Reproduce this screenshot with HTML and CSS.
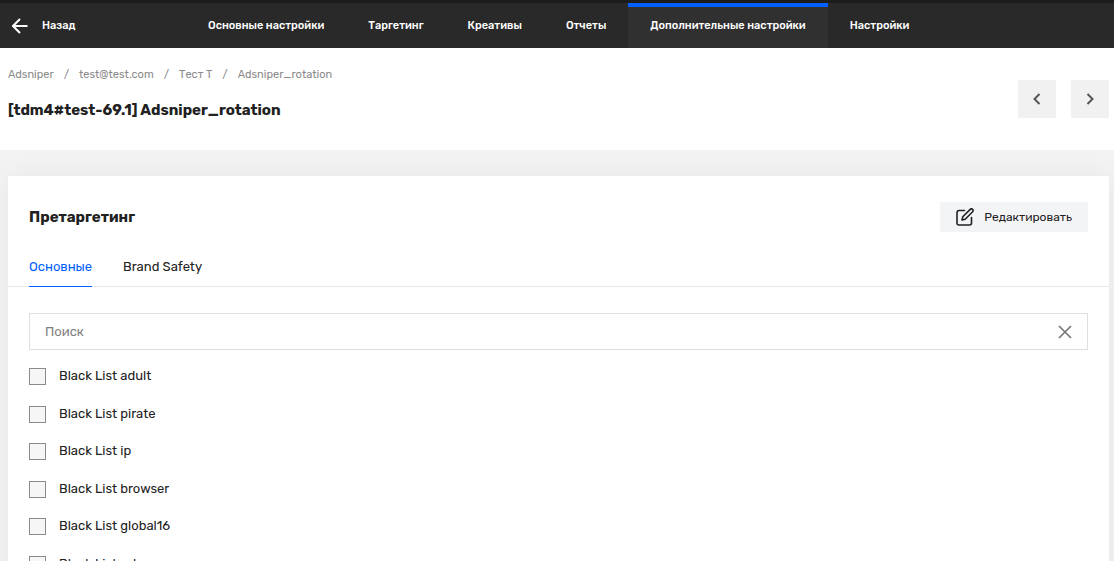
FILE: index.html
```html
<!DOCTYPE html>
<html lang="ru">
<head>
<meta charset="utf-8">
<meta name="viewport" content="width=device-width, initial-scale=1">
<title>Adsniper_rotation</title>
<link rel="stylesheet" href="styles.css">
</head>
<body>
<div class="app">
  <header class="topbar">
    <a class="back" href="#">
      <svg class="back-icon" viewBox="0 0 16 16" width="16" height="16" aria-hidden="true"><path d="M15.5 8H1M8 1 1 8l7 7"/></svg>
      <span>Назад</span>
    </a>
    <nav class="menu">
      <a class="menu-item" href="#">Основные настройки</a>
      <a class="menu-item" href="#">Таргетинг</a>
      <a class="menu-item" href="#">Креативы</a>
      <a class="menu-item" href="#">Отчеты</a>
      <a class="menu-item menu-item-active" href="#">Дополнительные настройки</a>
      <a class="menu-item" href="#">Настройки</a>
    </nav>
  </header>

  <section class="heading">
    <div class="heading-text">
      <nav class="crumbs">
        <a href="#">Adsniper</a><span>/</span><a href="#">test@test.com</a><span>/</span><a href="#">Тест Т</a><span>/</span><a href="#">Adsniper_rotation</a>
      </nav>
      <h1 class="title">[tdm4#test-69.1] Adsniper_rotation</h1>
    </div>
    <div class="pager">
      <button class="pager-button" type="button" aria-label="Назад"><svg viewBox="0 0 8 12" width="8" height="12"><path d="M6.500 1 1.500 6l5 5"/></svg></button>
      <button class="pager-button" type="button" aria-label="Вперед"><svg viewBox="0 0 8 12" width="8" height="12"><path d="m1.500 1 5 5-5 5"/></svg></button>
    </div>
  </section>

  <main class="content">
    <section class="card">
      <div class="card-head">
        <h2 class="card-title">Претаргетинг</h2>
        <button class="edit" type="button">
          <svg class="edit-icon" viewBox="0 0 18 18" width="18" height="18" aria-hidden="true"><path d="M8.500 2.500H3a2 2 0 0 0-2 2V15a2 2 0 0 0 2 2h10.500a2 2 0 0 0 2-2V9.500"/><path d="M6 12 6.800 8.800 14.200 1.400a1.600 1.600 0 0 1 2.400 2.400L9.200 11.200z"/></svg>
          <span>Редактировать</span>
        </button>
      </div>
      <nav class="tabs">
        <a class="tab tab-active" href="#">Основные</a>
        <a class="tab" href="#">Brand Safety</a>
      </nav>
      <div class="panel">
        <div class="search">
          <input class="search-input" type="text" placeholder="Поиск" aria-label="Поиск">
          <button class="clear" type="button" aria-label="Очистить"><svg viewBox="0 0 14 14" width="14" height="14"><path d="m1 1 12 12M13 1 1 13"/></svg></button>
        </div>
        <div class="options">
          <label class="option"><input class="check" type="checkbox"><span>Black List adult</span></label>
          <label class="option"><input class="check" type="checkbox"><span>Black List pirate</span></label>
          <label class="option"><input class="check" type="checkbox"><span>Black List ip</span></label>
          <label class="option"><input class="check" type="checkbox"><span>Black List browser</span></label>
          <label class="option"><input class="check" type="checkbox"><span>Black List global16</span></label>
          <label class="option"><input class="check" type="checkbox"><span>Black List url</span></label>
        </div>
      </div>
    </section>
  </main>
</div>
</body>
</html>
```
FILE: styles.css
```css
* { box-sizing: border-box; }

body {
  margin: 0;
  color: #212121;
  background: #f3f3f3;
  font: 13px/20px Rubik, Roboto, "Noto Sans", sans-serif;
}

a { color: inherit; text-decoration: none; }
button, input { font: inherit; color: inherit; }
button { border: 0; padding: 0; cursor: pointer; }
svg { display: block; fill: none; stroke: currentColor; }

.app { height: 100vh; overflow: hidden auto; scrollbar-width: none; }

.topbar {
  display: flex;
  height: 48px;
  border-top: 3px solid #1c1c1c;
  background: #292929;
  color: #fff;
  font-size: 11px;
  font-weight: 500;
}
.back {
  display: flex;
  align-items: center;
  gap: 14px;
  width: 186px;
  padding-left: 12px;
}
.back-icon { stroke-width: 2; }
.menu { display: flex; }
.menu-item {
  display: flex;
  align-items: center;
  padding: 0 22px;
  white-space: nowrap;
}
.menu-item-active {
  background: #303030;
  box-shadow: inset 0 4px #0060ff;
}

.heading {
  display: flex;
  justify-content: space-between;
  align-items: flex-start;
  padding: 16px 5px 16px 8px;
  background: #fff;
}
.crumbs {
  display: flex;
  gap: 10px;
  padding-top: 1px;
  color: #8a8a8a;
  font-size: 11px;
}
.title {
  margin: 15px 0 0;
  font-size: 15px;
  line-height: 20px;
  font-weight: 700;
}
.pager { display: flex; gap: 15px; padding: 16px 0; }
.pager-button {
  display: grid;
  place-items: center;
  width: 38px;
  height: 38px;
  background: #f1f1f1;
  color: #555;
}
.pager-button svg { stroke-width: 2; }

.content { padding: 26px 5px 26px 8px; }
.card {
  background: #fff;
  box-shadow: 0 0 30px rgba(0, 0, 0, 0.06);
}
.card-head {
  display: flex;
  justify-content: space-between;
  align-items: center;
  padding: 26px 21px 0;
}
.card-title {
  margin: 0;
  font-size: 15px;
  font-weight: 700;
}
.edit {
  display: flex;
  align-items: center;
  gap: 10px;
  height: 30px;
  padding: 0 16px;
  background: #f3f4f6;
  font-size: 12px;
}
.edit-icon { stroke-width: 1.6; stroke-linejoin: round; stroke-linecap: round; }
.tabs {
  display: flex;
  gap: 31px;
  margin-top: 25px;
  padding: 0 21px;
  border-bottom: 1px solid #e8e8e8;
}
.tab {
  margin-bottom: -1px;
  padding-bottom: 9px;
  border-bottom: 1px solid transparent;
}
.tab-active { border-color: #0060ff; color: #0060ff; }

.panel { padding: 26px 21px; }
.search {
  display: flex;
  height: 37px;
  border: 1px solid #dfdfdf;
}
.search-input {
  flex: 1;
  min-width: 0;
  padding: 0 15px;
  border: 0;
  outline: 0;
  background: transparent;
}
.search-input::placeholder { color: #808080; opacity: 1; }
.clear {
  display: grid;
  place-items: center;
  width: 44px;
  background: transparent;
  color: #777;
}
.clear svg { stroke-width: 1.7; }

.options {
  display: grid;
  grid-auto-rows: 38px 37px;
  padding-top: 16px;
}
.option {
  display: flex;
  align-items: flex-start;
  gap: 13px;
}
.check {
  appearance: none;
  width: 17px;
  height: 17px;
  margin: 2px 0 0;
  border: 1px solid #8a8a8a;
  background: #f6f6f6;
}
.check:checked { background: #0060ff; }
```
